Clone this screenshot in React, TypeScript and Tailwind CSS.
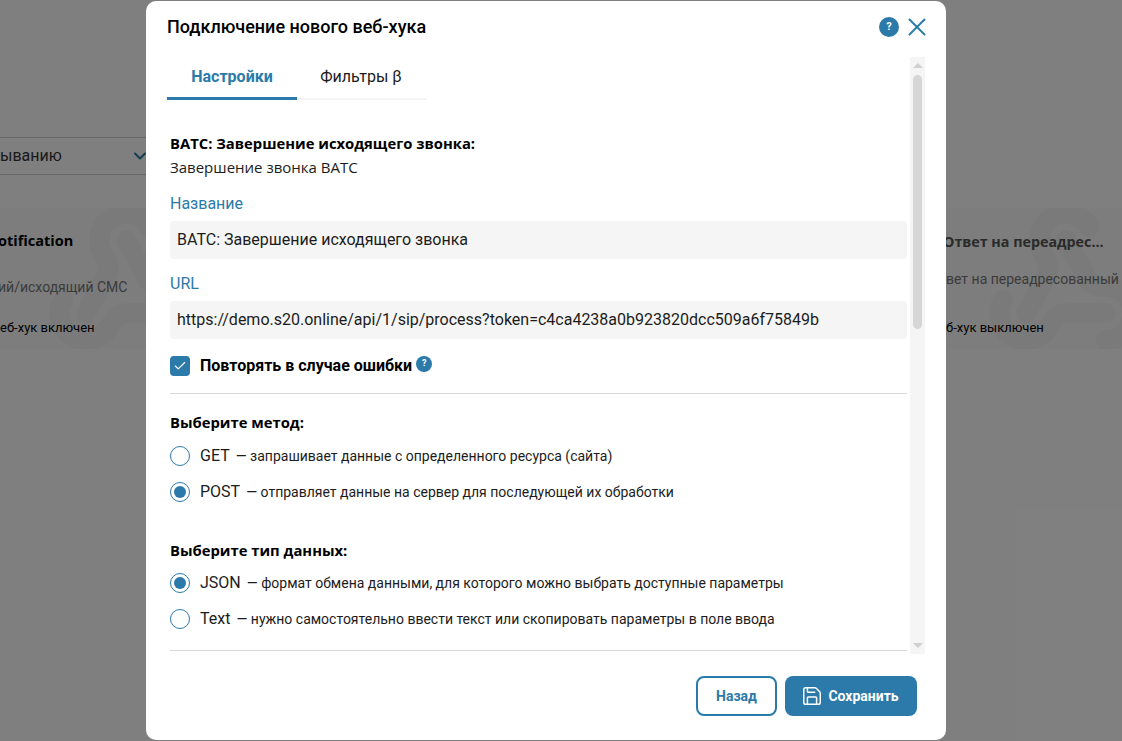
import { Check, ChevronDown, Save, Webhook, X } from "lucide-react";

const blue = "text-[#2b7aa9]";
const heading = "font-['Open_Sans',sans-serif] text-[14.8px] font-bold leading-5 text-black";

function Hint({ small }: { small?: boolean }) {
    return (
        <span
            className={
                small
                    ? "flex h-4 w-4 items-center justify-center rounded-full bg-[#2b7aa9] text-[9px] font-bold text-white"
                    : "flex h-5 w-5 items-center justify-center rounded-full bg-[#2b7aa9] text-[11px] font-bold text-white"
            }
        >
            ?
        </span>
    );
}

function Radio({ on, name, desc }: { on?: boolean; name: string; desc: string }) {
    return (
        <div className="flex h-5 items-center">
            <span className="flex h-5 w-5 items-center justify-center rounded-full border border-[#2b7aa9] bg-white">
                {on && <span className="h-3 w-3 rounded-full bg-[#2b7aa9]" />}
            </span>
            <span className="ml-2.5 text-base text-[#1c1c1c]">{name}</span>
            <span className="-mt-px ml-1.5 text-sm text-[#1c1c1c]">— {desc}</span>
        </div>
    );
}

function Field({ label, value }: { label: string; value: string }) {
    return (
        <div>
            <div className={`text-base leading-5 ${blue}`}>{label}</div>
            <div className="mt-[7px] flex h-[38px] items-center rounded bg-[#f5f5f5] px-[7px] text-base text-[#1c1c1c]">
                {value}
            </div>
        </div>
    );
}

function Backdrop() {
    return (
        <div className="h-[741px] w-[1122px] overflow-hidden bg-white pt-[137px]">
            <div className="flex h-[38px] w-[152px] items-center justify-between border-y border-[#cfcfcf] pr-[2px] text-base text-[#333]">
                <span className="-mt-px">ыванию</span>
                <ChevronDown className="h-5 w-5 text-[#2b7aa9]" strokeWidth={2.5} />
            </div>
            <div className="mt-[33px] flex justify-between">
                <div className="relative h-[141px] w-[200px] overflow-hidden whitespace-nowrap bg-[#fafafa] pt-[23px] text-black">
                    <Webhook className="absolute left-[46px] top-[-8px] h-[160px] w-[160px] text-[#f4f4f4]" strokeWidth={3} />
                    <div className="relative -ml-[2px] font-['Open_Sans',sans-serif] text-[14.5px] font-bold leading-5">otification</div>
                    <div className="relative -ml-[2px] mt-[26px] text-sm leading-5 text-[#777]">ий/исходящий СМС</div>
                    <div className="relative mt-[21px] text-[13px] leading-5">еб-хук включен</div>
                </div>
                <div className="relative h-[141px] w-[176px] overflow-hidden whitespace-nowrap bg-[#fafafa] pt-[24px]">
                    <Webhook className="absolute left-[40px] top-[-8px] h-[160px] w-[160px] text-[#f4f4f4]" strokeWidth={3} />
                    <div className="relative -ml-[3px] font-['Open_Sans',sans-serif] text-[14.3px] font-bold leading-5 text-[#555]">Ответ на переадрес...</div>
                    <div className="relative mt-[17px] text-sm leading-5 text-[#777]">вет на переадресованный</div>
                    <div className="relative mt-[29px] text-[13px] leading-5 text-black">б-хук выключен</div>
                </div>
            </div>
        </div>
    );
}

export default function App() {
    return (
        <div className="relative h-[741px] w-[1122px] overflow-hidden font-['Roboto',sans-serif]">
            <Backdrop />
            <div className="absolute inset-0 bg-black/50" />
            <div className="absolute left-[146px] top-px flex h-[739px] w-[800px] flex-col rounded-[10px] bg-white">
                <div className="flex h-[52px] shrink-0 items-center justify-between pl-[21px] pr-[14px]">
                    <h2 className="text-lg font-medium text-black">Подключение нового веб-хука</h2>
                    <div className="flex items-center gap-[3px]">
                        <Hint />
                        <X className={`h-[30px] w-[30px] ${blue}`} strokeWidth={1.6} />
                    </div>
                </div>
                <div className="relative mt-1 h-[597px] shrink-0 pl-6 pr-[39px]">
                    <div className="-ml-[3px] flex h-[43px] w-[260px] border-b-2 border-[#f5f5f5]">
                        <div className={`-mb-0.5 flex w-[130px] items-center justify-center border-b-[3px] border-[#2b7aa9] text-base font-bold ${blue}`}>
                            Настройки
                        </div>
                        <div className="flex w-[130px] items-center justify-center pb-[2px] pr-[2px] text-base text-[#1c1c1c]">Фильтры β</div>
                    </div>
                    <div className="pt-[33px]">
                        <div className={heading}>ВАТС: Завершение исходящего звонка:</div>
                        <div className="mt-1 font-['Open_Sans',sans-serif] text-[15px] leading-5 text-[#1c1c1c]">Завершение звонка ВАТС</div>
                        <div className="mt-[17px] space-y-[15px]">
                            <Field label="Название" value="ВАТС: Завершение исходящего звонка" />
                            <Field label="URL" value="https://demo.s20.online/api/1/sip/process?token=c4ca4238a0b923820dcc509a6f75849b" />
                        </div>
                        <div className="mt-[17px] flex h-5 items-center">
                            <span className="flex h-5 w-5 items-center justify-center rounded-sm bg-[#2b7aa9]">
                                <Check className="h-3.5 w-3.5 text-white" strokeWidth={2} />
                            </span>
                            <span className="ml-2.5 text-base font-bold text-black">Повторять в случае ошибки</span>
                            <span className="-mt-1 ml-1">
                                <Hint small />
                            </span>
                        </div>
                        <div className="mt-[17px] border-t border-[#d9d9d9]" />
                        <div className={`mt-[18px] ${heading}`}>Выберите метод:</div>
                        <div className="mt-[14px] space-y-4">
                            <Radio name="GET" desc="запрашивает данные с определенного ресурса (сайта)" />
                            <Radio on name="POST" desc="отправляет данные на сервер для последующей их обработки" />
                        </div>
                        <div className={`mt-[38px] ${heading}`}>Выберите тип данных:</div>
                        <div className="mt-[13px] space-y-4">
                            <Radio on name="JSON" desc="формат обмена данными, для которого можно выбрать доступные параметры" />
                            <Radio name="Text" desc="нужно самостоятельно ввести текст или скопировать параметры в поле ввода" />
                        </div>
                        <div className="mt-[21px] border-t border-[#d9d9d9]" />
                    </div>
                    <div className="absolute right-[21px] top-0 flex h-[597px] w-[15px] flex-col items-center bg-[#f5f5f5]">
                        <span className="mt-[6px] border-x-[5px] border-b-[5px] border-x-transparent border-b-[#d0d0d0]" />
                        <span className="mt-[7px] h-[254px] w-[9px] rounded-full bg-[#d6d6d6]" />
                        <span className="mt-auto mb-[6px] border-x-[5px] border-t-[5px] border-x-transparent border-t-[#d0d0d0]" />
                    </div>
                </div>
                <div className="mt-[22px] flex justify-end gap-2 pr-[29px]">
                    <button className={`h-10 w-[81px] rounded-lg border-2 border-[#2b7aa9] text-sm font-bold ${blue}`}>Назад</button>
                    <button className="flex h-10 w-[132px] items-center justify-center gap-[5px] rounded-lg bg-[#2b7aa9] pr-[2px] text-sm font-bold text-white">
                        <Save className="h-[22px] w-[22px]" strokeWidth={1.6} />
                        Сохранить
                    </button>
                </div>
            </div>
        </div>
    );
}
